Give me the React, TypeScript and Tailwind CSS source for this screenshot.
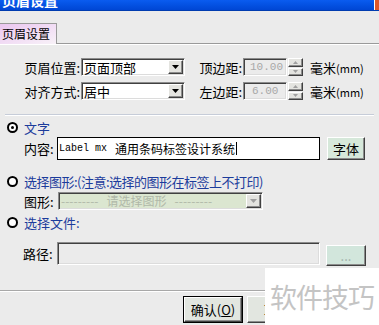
import React from 'react';

const sunken =
  'border border-t-[#8c8c8c] border-l-[#8c8c8c] border-b-white border-r-white shadow-[inset_1px_1px_0_#404040,inset_-1px_-1px_0_#dcdcdc]';
const raised =
  'border border-t-white border-l-white border-b-[#404040] border-r-[#404040] shadow-[inset_-1px_-1px_0_#8c8c8c]';

function Arrow({ color = '#000' }: { color?: string }) {
  return (
    <svg width="7" height="4" viewBox="0 0 7 4">
      <path d="M0 0h7L3.5 4z" fill={color} />
    </svg>
  );
}

function DropBtn({ color }: { color?: string }) {
  return (
    <div className={`w-[15px] h-[14px] bg-[#e4e4e0] flex items-center justify-center ${raised}`}>
      <Arrow color={color} />
    </div>
  );
}

function Select({ value, width }: { value: string; width: string }) {
  return (
    <div className={`${width} h-[18px] bg-white flex items-center justify-between pl-[2px] pr-[1px] ${sunken}`}>
      <span className="leading-none">{value}</span>
      <DropBtn />
    </div>
  );
}

function Spin() {
  return (
    <div className="w-[15px] h-[18px] ml-[1px] flex flex-col gap-[1px]">
      <div className={`flex-1 bg-[#e4e4e0] flex items-center justify-center ${raised}`}>
        <svg width="5" height="3" viewBox="0 0 5 3"><path d="M0 3h5L2.5 0z" fill="#a0a0a0" /></svg>
      </div>
      <div className={`flex-1 bg-[#e4e4e0] flex items-center justify-center ${raised}`}>
        <svg width="5" height="3" viewBox="0 0 5 3"><path d="M0 0h5L2.5 3z" fill="#a0a0a0" /></svg>
      </div>
    </div>
  );
}

function Radio({ checked, label, tight }: { checked?: boolean; label: string; tight?: boolean }) {
  return (
    <div className="flex items-center h-[14px] pl-[7px]">
      <div className="w-[11px] h-[11px] rounded-full border-2 border-black flex items-center justify-center bg-white">
        {checked && <div className="w-[3px] h-[3px] rounded-full bg-black" />}
      </div>
      <span className={`ml-[6px] text-[#1c3c9c] leading-none ${tight ? 'tracking-[-0.5px]' : ''}`}>{label}</span>
    </div>
  );
}

export default function App() {
  return (
    <div className="w-[379px] h-[325px] bg-[#ebebeb] relative overflow-hidden text-[13px] text-black font-['Noto_Sans_CJK_SC',sans-serif]">
      {/* title bar */}
      <div className="h-[11px] bg-gradient-to-b from-[#0a5cf0] to-[#0046d4] border-b border-[#003cb0] flex justify-between overflow-hidden">
        <span className="text-white font-bold text-[14px] leading-none mt-[-7px] ml-[2px]">页眉设置</span>
        <div className="w-[5px] h-[10px] bg-[#e0582a] border-l border-white" />
      </div>

      {/* tabs */}
      <div className="mt-[12px] h-[21px] flex border-b border-[#9a9a9a] shadow-[0_1px_0_#fff]">
        <div className="w-[57px] h-[21px] -mb-px border-t border-r border-[#9a9a9a] bg-gradient-to-br from-[#eac6f0] to-[#f8f2f8] flex items-center pl-[2px]">
          <span className="leading-none text-[12px]">页眉设置</span>
        </div>
      </div>

      {/* header position rows */}
      <div className="mt-[14px] flex items-center h-[18px]">
        <div className="w-[81px] text-right pr-[1px] leading-none">页眉位置:</div>
        <Select value="页面顶部" width="w-[104px]" />
        <div className="w-[58px] text-right pr-[1px] leading-none">顶边距:</div>
        <div className={`w-[44px] h-[18px] flex items-center pl-[6px] text-[#a8a8a8] font-['Liberation_Mono',monospace] text-[11px] ${sunken}`}>10.00</div>
        <Spin />
        <span className="ml-[7px] leading-none">毫米<span className="text-[11px]">(mm)</span></span>
      </div>
      <div className="mt-[6px] flex items-center h-[18px]">
        <div className="w-[81px] text-right pr-[1px] leading-none">对齐方式:</div>
        <Select value="居中" width="w-[104px]" />
        <div className="w-[58px] text-right pr-[1px] leading-none">左边距:</div>
        <div className={`w-[44px] h-[18px] flex items-center pl-[8px] text-[#a8a8a8] font-['Liberation_Mono',monospace] text-[11px] ${sunken}`}>6.00</div>
        <Spin />
        <span className="ml-[7px] leading-none">毫米<span className="text-[11px]">(mm)</span></span>
      </div>

      <div className="mt-[14px] mx-[5px] h-px bg-[#c6ccd8] shadow-[0_1px_0_#fff]" />

      {/* text option */}
      <div className="mt-[5px]">
        <Radio checked label="文字" />
      </div>
      <div className="mt-[3px] flex items-center h-[23px]">
        <div className="w-[57px] pl-[24px] leading-none">内容:</div>
        <div className="w-[263px] h-[23px] bg-white border border-black flex items-center pl-[1px] leading-none text-[12px]">
          <span className="font-['Liberation_Mono',monospace] text-[10px]">Label mx</span>
          <span className="ml-[8px]">通用条码标签设计系统</span>
          <span className="ml-px w-px h-[13px] bg-black" />
        </div>
        <div className={`ml-[7px] w-[38px] h-[23px] bg-[#d6e8da] flex items-center justify-center leading-none ${raised}`}>字体</div>
      </div>

      {/* graphic option */}
      <div className="mt-[14px]">
        <Radio tight label="选择图形:(注意:选择的图形在标签上不打印)" />
      </div>
      <div className="mt-[4px] flex items-center h-[18px]">
        <div className="w-[58px] pl-[24px] leading-none">图形:</div>
        <div className={`w-[205px] h-[18px] bg-[#dbe6d0] flex items-center justify-between pl-[2px] pr-[1px] ${sunken}`}>
          <span className="text-[#b0b8a8] leading-none whitespace-pre text-[12px]">---------   请选择图形   ---------</span>
          <DropBtn color="#a0a0a0" />
        </div>
      </div>

      {/* file option */}
      <div className="mt-[5px]">
        <Radio label="选择文件:" />
      </div>
      <div className="mt-[13px] flex items-center h-[23px]">
        <div className="w-[57px] pl-[23px] leading-none">路径:</div>
        <div className={`w-[263px] h-[23px] bg-[#ebebeb] ${sunken}`} />
        <div className={`ml-[6px] mt-[3px] w-[40px] h-[21px] bg-[#d2e6dc] flex items-center justify-center text-[#a0b0a8] leading-none ${raised}`}>...</div>
      </div>

      <div className="mt-[25px] h-px bg-[#a8a8a8] shadow-[0_1px_0_#fff]" />

      {/* buttons */}
      <div className="mt-[5px] flex pl-[183px] gap-[4px]">
        <div className="w-[60px] h-[27px] border border-black">
          <div className={`w-full h-full bg-[#e2e6e0] flex items-center justify-center leading-none ${raised}`}>
            确认(<span className="underline">O</span>)
          </div>
        </div>
        <div className={`w-[60px] h-[27px] bg-[#e2e6e0] flex items-center justify-center leading-none ${raised}`}>取消</div>
      </div>

      {/* watermark */}
      <div className="absolute left-[265px] top-[268px] right-0 bottom-0 bg-white flex items-center pl-[5px]">
        <span className="text-[#c4c4c4] text-[27px] leading-none tracking-[-1px]">软件技巧</span>
      </div>
    </div>
  );
}
